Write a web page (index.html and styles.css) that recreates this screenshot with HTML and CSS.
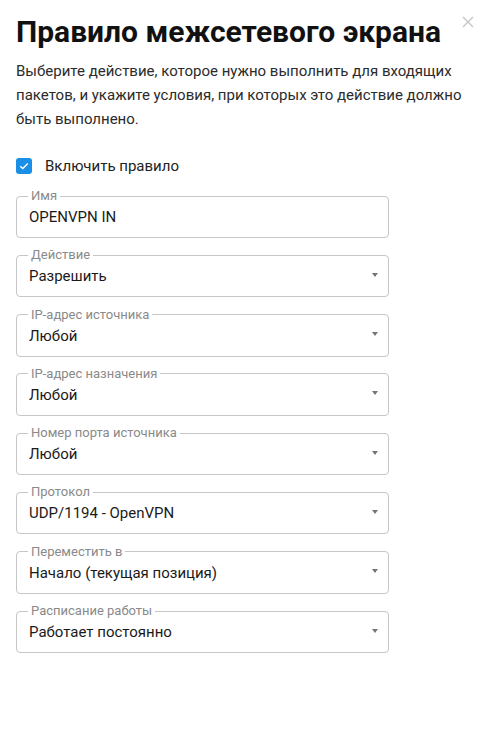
FILE: index.html
```html
<!DOCTYPE html>
<html lang="ru">
<head>
    <meta charset="UTF-8">
    <meta name="viewport" content="width=device-width, initial-scale=1.0">
    <title>Правило межсетевого экрана</title>
    <link rel="stylesheet" href="styles.css">
</head>
<body>
    <div class="dialog">
        <header class="dialog-head">
            <h1>Правило межсетевого экрана</h1>
            <button class="close-btn" aria-label="Закрыть">
                <svg width="12" height="12" viewBox="0 0 12 12">
                    <path d="M1 1L11 11M11 1L1 11" stroke="#c4c4c4" stroke-width="1.3" fill="none"/>
                </svg>
            </button>
        </header>

        <p class="intro">Выберите действие, которое нужно выполнить для входящих пакетов, и укажите условия, при которых это действие должно быть выполнено.</p>

        <label class="check-row">
            <span class="check-box">
                <svg width="10" height="8" viewBox="0 0 10 8">
                    <path d="M1.2 4.2L3.8 6.6L8.8 1.4" stroke="#fff" stroke-width="1.4" fill="none"/>
                </svg>
            </span>
            Включить правило
        </label>

        <div class="fields">
            <fieldset class="field">
                <legend>Имя</legend>
                <div class="field-value">OPENVPN IN</div>
            </fieldset>
            <fieldset class="field">
                <legend>Действие</legend>
                <div class="field-value">Разрешить<span class="caret"></span></div>
            </fieldset>
            <fieldset class="field">
                <legend>IP-адрес источника</legend>
                <div class="field-value">Любой<span class="caret"></span></div>
            </fieldset>
            <fieldset class="field">
                <legend>IP-адрес назначения</legend>
                <div class="field-value">Любой<span class="caret"></span></div>
            </fieldset>
            <fieldset class="field">
                <legend>Номер порта источника</legend>
                <div class="field-value">Любой<span class="caret"></span></div>
            </fieldset>
            <fieldset class="field">
                <legend>Протокол</legend>
                <div class="field-value">UDP/1194 - OpenVPN<span class="caret"></span></div>
            </fieldset>
            <fieldset class="field">
                <legend>Переместить в</legend>
                <div class="field-value">Начало (текущая позиция)<span class="caret"></span></div>
            </fieldset>
            <fieldset class="field">
                <legend>Расписание работы</legend>
                <div class="field-value">Работает постоянно<span class="caret"></span></div>
            </fieldset>
        </div>
    </div>
</body>
</html>
```

FILE: styles.css
```css
body {
    margin: 0;
    font-family: Roboto, 'Noto Sans', sans-serif;
    color: #1a1a1a;
    background: #fff;
}

.dialog {
    padding: 16px;
}

.dialog-head {
    display: flex;
    justify-content: space-between;
    align-items: flex-start;
}

h1 {
    margin: 0;
    font-size: 30px;
    line-height: 32px;
    font-weight: 700;
    color: #111;
}

.close-btn {
    border: none;
    background: none;
    padding: 0;
    margin: 0 13px 0 0;
    width: 12px;
    height: 12px;
    line-height: 0;
    cursor: pointer;
}

.intro {
    margin: 11px 0 0;
    font-size: 15px;
    line-height: 24px;
    color: #2b2b2b;
}

.check-row {
    display: flex;
    align-items: center;
    gap: 13px;
    margin-top: 23px;
    height: 24px;
    font-size: 15px;
    color: #222;
}

.check-box {
    width: 16px;
    height: 16px;
    border-radius: 3px;
    background: #1b8ee6;
    display: flex;
    align-items: center;
    justify-content: center;
}

.fields {
    display: flex;
    flex-direction: column;
    gap: 11.3px;
    margin-top: 12px;
    width: 373px;
}

.field {
    margin: 0;
    padding: 0 10px 0 12px;
    border: 1px solid #c6c6c6;
    border-radius: 4px;
    min-width: 0;
}

.field legend {
    margin-left: -1px;
    padding: 0 3px;
    font-size: 13px;
    line-height: 12px;
    color: #8a8a8a;
}

.field-value {
    display: flex;
    justify-content: space-between;
    align-items: center;
    padding: 5px 0 10px;
    font-size: 15px;
    line-height: 20px;
    color: #1a1a1a;
}

.caret {
    width: 0;
    height: 0;
    margin-top: -3px;
    border-left: 3px solid transparent;
    border-right: 3px solid transparent;
    border-top: 4px solid #757575;
}
```
